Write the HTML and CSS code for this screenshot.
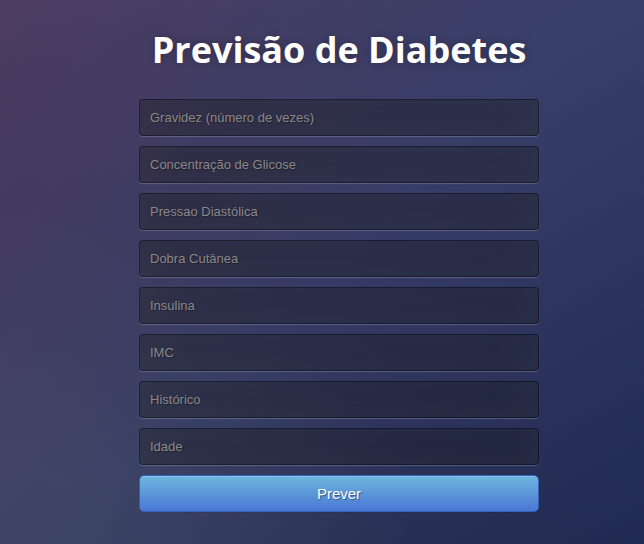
FILE: index.html
```html
<!DOCTYPE html>
<html lang="pt">
<head>
<meta charset="utf-8">
<title>Previsão de Diabetes</title>
<link rel="stylesheet" href="styles.css">
</head>
<body>
<div class="login">
  <h1 class="title">Previsão de Diabetes</h1>
  <form class="form">
    <input class="field" type="text" placeholder="Gravidez (número de vezes)">
    <input class="field" type="text" placeholder="Concentração de Glicose">
    <input class="field" type="text" placeholder="Pressao Diastólica">
    <input class="field" type="text" placeholder="Dobra Cutânea">
    <input class="field" type="text" placeholder="Insulina">
    <input class="field" type="text" placeholder="IMC">
    <input class="field" type="text" placeholder="Histórico">
    <input class="field" type="text" placeholder="Idade">
    <button class="btn" type="button">Prever</button>
  </form>
</div>
</body>
</html>
```

FILE: styles.css
```css
html, body {
  margin: 0;
  width: 100%;
  height: 100%;
}
body {
  font-family: "Liberation Sans", Arial, sans-serif;
  background: #2d3458;
  background:
    radial-gradient(ellipse farthest-corner at 0% 100%, rgba(104,128,138,.18) 10%, rgba(104,128,138,0) 45%),
    linear-gradient(to bottom, rgba(80,120,190,.10) 0%, rgba(0,0,20,.06) 100%),
    linear-gradient(135deg, #4c3556 0%, #363a62 50%, #222c55 100%);
  overflow: hidden;
}
.login {
  width: 400px;
  margin-left: 139px;
  padding-top: 25px;
}
.title {
  margin: 0 0 0 -20px;
  width: 440px;
  font-family: "Open Sans", sans-serif;
  font-weight: 700;
  font-size: 36px;
  line-height: 50px;
  color: #fff;
  letter-spacing: 0;
  text-align: center;
  text-shadow: 0 0 10px rgba(0,0,0,0.3);
}
.form {
  display: flex;
  flex-direction: column;
  margin-top: 24px;
}
.field {
  box-sizing: border-box;
  width: 100%;
  height: 37px;
  margin: 0 0 10px 0;
  padding: 10px;
  background: rgba(0,0,0,0.3);
  border: 1px solid rgba(0,0,0,0.3);
  border-radius: 4px;
  outline: none;
  font-family: "Liberation Sans", Arial, sans-serif;
  font-size: 13px;
  color: #fff;
  text-shadow: 1px 1px 1px rgba(0,0,0,0.3);
  box-shadow: inset 0 -5px 45px rgba(100,100,100,0.2), 0 1px 1px rgba(255,255,255,0.2);
}
.field::placeholder {
  color: #888;
}
.btn {
  box-sizing: border-box;
  width: 100%;
  height: 37px;
  padding: 0;
  border: 1px solid #3762bc;
  border-radius: 5px;
  background: linear-gradient(to bottom, #6eb6de, #4a77d4);
  color: #fff;
  font-family: "Liberation Sans", Arial, sans-serif;
  font-size: 15px;
  text-shadow: 1px 1px 1px rgba(0,0,0,0.4);
  box-shadow: inset 0 1px 0 rgba(255,255,255,0.2), 0 1px 2px rgba(0,0,0,0.05);
  cursor: pointer;
}
```
